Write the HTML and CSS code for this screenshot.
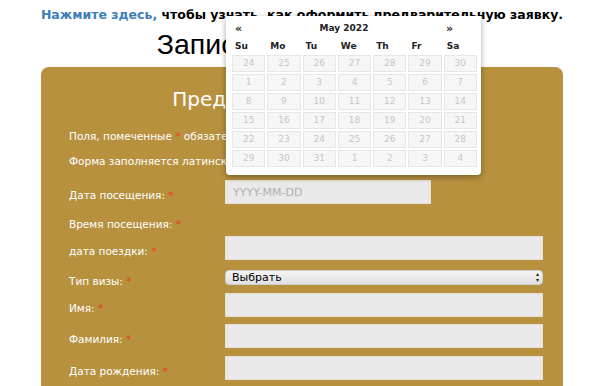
FILE: index.html
```html
<!DOCTYPE html>
<html lang="ru">
  <head>
    <meta charset="UTF-8" />
    <meta name="viewport" content="width=device-width, initial-scale=1.0" />
    <title>Запись</title>
    <link rel="stylesheet" href="styles.css">
  </head>
  <body>
    <div class="page">
      <p class="notice"><a href="#">Нажмите здесь,</a> чтобы узнать, как оформить предварительную заявку.</p>
      <h1 class="title">Записаться на подачу</h1>

      <div class="panel">
        <h2>Предварительная запись</h2>
        <p class="note">Поля, помеченные <span class="req">*</span> обязательны для заполнения.</p>
        <p class="note">Форма заполняется латинскими буквами.</p>

        <form class="form">
          <div class="row">
            <label>Дата посещения: <span class="req">*</span></label>
            <input type="text" class="field short" placeholder="YYYY-MM-DD" />
          </div>
          <div class="row row-empty">
            <label>Время посещения: <span class="req">*</span></label>
          </div>
          <div class="row row-trip">
            <label>дата поездки: <span class="req">*</span></label>
            <input type="text" class="field" />
          </div>
          <div class="row row-select">
            <label>Тип визы: <span class="req">*</span></label>
            <div class="select-box">
              <select class="select">
                <option>Выбрать</option>
              </select>
              <span class="arrows">▴<br />▾</span>
            </div>
          </div>
          <div class="row row-name">
            <label>Имя: <span class="req">*</span></label>
            <input type="text" class="field" />
          </div>
          <div class="row">
            <label>Фамилия: <span class="req">*</span></label>
            <input type="text" class="field" />
          </div>
          <div class="row">
            <label>Дата рождения: <span class="req">*</span></label>
            <input type="text" class="field" />
          </div>
        </form>
      </div>

      <div class="datepicker">
        <div class="dp-head">
          <span class="dp-prev">«</span>
          <span class="dp-month">May 2022</span>
          <span class="dp-next">»</span>
        </div>
        <div class="dp-grid">
          <b>Su</b><b>Mo</b><b>Tu</b><b>We</b><b>Th</b><b>Fr</b><b>Sa</b>
        </div>
        <div class="dp-grid dp-days">
          <span>24</span><span>25</span><span>26</span><span>27</span><span>28</span><span>29</span><span>30</span>
          <span>1</span><span>2</span><span>3</span><span>4</span><span>5</span><span>6</span><span>7</span>
          <span>8</span><span>9</span><span>10</span><span>11</span><span>12</span><span>13</span><span>14</span>
          <span>15</span><span>16</span><span>17</span><span>18</span><span>19</span><span>20</span><span>21</span>
          <span>22</span><span>23</span><span>24</span><span>25</span><span>26</span><span>27</span><span>28</span>
          <span>29</span><span>30</span><span>31</span><span>1</span><span>2</span><span>3</span><span>4</span>
        </div>
      </div>
    </div>
  </body>
</html>
```

FILE: styles.css
```css
body {
  margin: 0;
  background: #fff;
  font-family: "DejaVu Sans", Verdana, sans-serif;
  color: #000;
}

.page {
  position: relative;
  padding-left: 4px;
  padding-top: 7px;
}

.notice {
  margin: 0;
  text-align: center;
  font-size: 12.5px;
  line-height: 16px;
  font-weight: bold;
}

.notice a {
  color: #3d7db9;
  text-decoration: none;
}

.title {
  margin: 5px 0 7px;
  text-align: center;
  font-family: "Liberation Sans", Arial, sans-serif;
  font-size: 28.5px;
  line-height: 32px;
  font-weight: normal;
}

.panel {
  width: 522px;
  margin: 0 auto;
  box-sizing: border-box;
  padding: 19px 20px 30px 28px;
  background: #b8913f;
  border-radius: 8px;
  color: #fff;
}

.panel h2 {
  margin: 0 0 17px;
  text-align: center;
  font-size: 20px;
  line-height: 26px;
  font-weight: normal;
}

.note {
  margin: 0 0 11px;
  font-size: 10.5px;
  line-height: 14px;
}

.req {
  color: #e5401d;
}

.form {
  margin-top: 12px;
}

.row {
  display: flex;
  align-items: flex-start;
  margin-bottom: 8px;
}

.row label {
  width: 156px;
  flex-shrink: 0;
  padding-top: 8px;
  font-size: 10.5px;
  line-height: 14px;
}

.row-empty {
  margin-bottom: 5px;
}

.row-empty label {
  padding-top: 5px;
}

.row-trip {
  margin-bottom: 10px;
}

.row-select {
  margin-bottom: 5px;
}

.row-select label {
  padding-top: 4px;
}

.row-name {
  margin-bottom: 7px;
}

.field {
  width: 318px;
  height: 24px;
  box-sizing: border-box;
  margin: 0;
  padding: 0 7px;
  border: 1px solid #e6dfcf;
  background: #e9e9e9;
  font-family: "DejaVu Sans", Verdana, sans-serif;
  font-size: 11px;
  outline: none;
}

.field.short {
  width: 206px;
}

.field::placeholder {
  color: #b0b0b0;
}

.select-box {
  position: relative;
  width: 318px;
}

.select {
  appearance: none;
  -webkit-appearance: none;
  display: block;
  width: 100%;
  height: 15px;
  margin: 0;
  padding: 0 6px;
  border: 1px solid #cfcfcf;
  border-radius: 4px;
  background: linear-gradient(#f4f4f4, #e0e0e0);
  font-family: "DejaVu Sans", Verdana, sans-serif;
  font-size: 11px;
  line-height: 13px;
  color: #000;
}

.arrows {
  position: absolute;
  right: 4px;
  top: 1px;
  font-size: 6px;
  line-height: 6px;
  color: #222;
  pointer-events: none;
}

.datepicker {
  position: absolute;
  left: 226px;
  top: 16px;
  width: 255px;
  box-sizing: border-box;
  padding: 4px 4px 8px 6px;
  background: #fff;
  border-radius: 0 0 4px 4px;
  box-shadow: 0 2px 6px rgba(0, 0, 0, 0.35);
  color: #222;
  font-size: 9px;
}

.dp-head {
  display: grid;
  grid-template-columns: 1fr auto 1fr;
  align-items: center;
  height: 16px;
  padding: 0 24px 0 3px;
  font-weight: bold;
}

.dp-prev,
.dp-next {
  font-size: 11px;
}

.dp-next {
  text-align: right;
}

.dp-grid {
  display: grid;
  grid-template-columns: repeat(7, 1fr);
  gap: 2px;
  width: 245px;
}

.dp-grid b {
  padding: 3px 0 0 3px;
  line-height: 14px;
  font-weight: bold;
}

.dp-days {
  margin-top: 2px;
}

.dp-days span {
  height: 17px;
  box-sizing: border-box;
  border: 1px solid #e6e6e6;
  background: #f6f6f6;
  color: #c6c6c6;
  text-align: center;
  line-height: 15px;
}
```
